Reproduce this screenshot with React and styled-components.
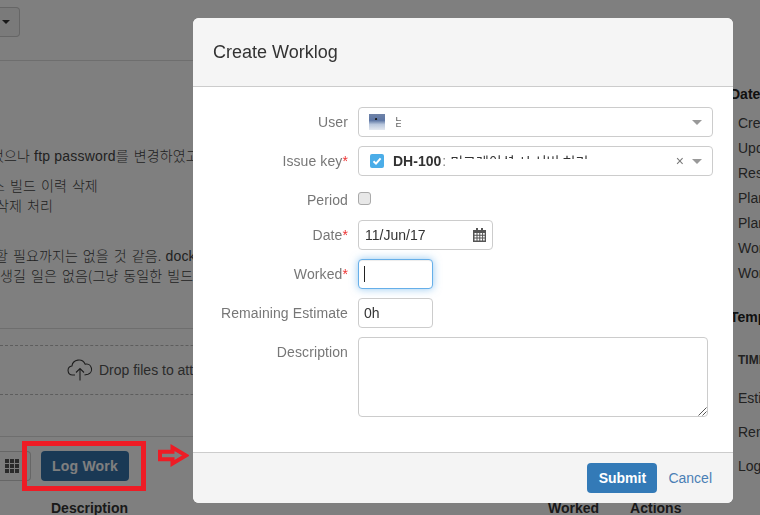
import React from 'react';
import styled, { createGlobalStyle } from 'styled-components';

const GlobalStyle = createGlobalStyle`
  html, body {
    margin: 0;
    padding: 0;
    height: 100%;
    overflow: hidden;
  }
  body {
    background: #fff;
    font-family: "Liberation Sans", "Noto Sans CJK KR", sans-serif;
    font-size: 14px;
    color: #333;
  }
`;

const dateRows = ['Created', 'Updated', 'Resolved', 'Planned start', 'Planned end', 'Work started', 'Work ended'];

const App = () => {
  return (
    <>
      <GlobalStyle />
      <Page>
        <MainColumn>
          <TopBar>
            <DropButton>
              <Caret />
            </DropButton>
          </TopBar>
          <BodyText>
            <BodyLine $indent={-9}>
              <Ko>었으나</Ko> ftp password<Ko>를 변경하였고 서버에 다시 등록</Ko>
            </BodyLine>
            <BodyLine $indent={-8} $gap={10}>
              <Ko>스 빌드 이력 삭제</Ko>
            </BodyLine>
            <BodyLine $indent={-4}>
              <Ko>삭제 처리</Ko>
            </BodyLine>
            <BodyLine $indent={-5} $gap={30}>
              <Ko>할 필요까지는 없을 것 같음.</Ko> docker <Ko>이미지 정리</Ko>
            </BodyLine>
            <BodyLine>
              <Ko>생길 일은 없음(그냥 동일한 빌드가 다시 생성됨)</Ko>
            </BodyLine>
          </BodyText>
          <DropArea>
            <DropZone>
              <svg width="26" height="22" viewBox="0 0 26 22" fill="none" stroke="#3c3c3c" strokeWidth="1.1">
                <path d="M8 16H5.5a4.5 4.5 0 0 1-.6-8.95A7 7 0 0 1 18.2 5.2a5.2 5.2 0 0 1 2.8 10L17.5 16" />
                <path d="M13 21.5V9.5M9 13.5l4-4 4 4" />
              </svg>
              Drop files to attach, or browse.
            </DropZone>
          </DropArea>
          <WorkBar>
            <GridButton>
              <svg width="14" height="14" viewBox="0 0 14 14" fill="#555">
                {[0, 5, 10].map((y) =>
                  [0, 5, 10].map((x) => <rect key={`${x}-${y}`} x={x} y={y} width="4" height="4" />)
                )}
              </svg>
            </GridButton>
            <LogWorkButton>Log Work</LogWorkButton>
          </WorkBar>
          <TableHead>
            <DescriptionHead>Description</DescriptionHead>
            <WorkedHead>Worked</WorkedHead>
            <ActionsHead>Actions</ActionsHead>
          </TableHead>
        </MainColumn>
        <SideColumn>
          <SideTitle>Dates</SideTitle>
          {dateRows.map((row) => (
            <SideRow key={row}>{row}</SideRow>
          ))}
          <SideTitle $top={23}>Tempo</SideTitle>
          <SideCaps>TIME</SideCaps>
          <SideSpaced>Estimated</SideSpaced>
          <SideSpaced>Remaining</SideSpaced>
          <SideSpaced>Logged</SideSpaced>
        </SideColumn>
      </Page>

      <Overlay />

      <RedBox />
      <RedArrow width="31" height="23" viewBox="0 0 31 23">
        <path d="M2 7.75h12.5V3.5L28 11.5l-13.5 8v-4.25H2z" fill="none" stroke="#ee1c25" strokeWidth="4" />
      </RedArrow>

      <Modal>
        <ModalHeader>Create Worklog</ModalHeader>
        <ModalBody>
          <Row>
            <Label>User</Label>
            <SelectBox>
              <Avatar />
              <GlitchName>
                <span>ㄴ</span>
                <span>ㄷ</span>
              </GlitchName>
              <SelectArrow />
            </SelectBox>
          </Row>
          <Row>
            <Label>Issue key<Star>*</Star></Label>
            <SelectBox>
              <IssueCheck>
                <svg width="10" height="10" viewBox="0 0 10 10" fill="none" stroke="#fff" strokeWidth="2">
                  <path d="M1.5 5.2 4 7.6 8.6 2.4" />
                </svg>
              </IssueCheck>
              <IssueKey>DH-100</IssueKey>
              <IssueColon>:</IssueColon>
              <IssueSummary>미그레이션 시 서버 처리</IssueSummary>
              <ClearMark>×</ClearMark>
              <SelectArrow />
            </SelectBox>
          </Row>
          <CheckRow>
            <Label>Period</Label>
            <CheckBox />
          </CheckRow>
          <Row>
            <Label>Date<Star>*</Star></Label>
            <DateBox>
              11/Jun/17
              <svg width="13" height="14" viewBox="0 0 13 14" fill="#555">
                <path d="M3 0h2v2h3V0h2v2h3v12H0V2h3zM1.5 5v1.8h2V5zm3 0v1.8h1.8V5zm2.8 0v1.8h1.8V5zm2.8 0v1.8h1.6V5zM1.5 7.8v1.8h2V7.8zm3 0v1.8h1.8V7.8zm2.8 0v1.8h1.8V7.8zm2.8 0v1.8h1.6V7.8zM1.5 10.6v1.9h2v-1.9zm3 0v1.9h1.8v-1.9zm2.8 0v1.9h1.8v-1.9zm2.8 0v1.9h1.6v-1.9z" fillRule="evenodd" />
              </svg>
            </DateBox>
          </Row>
          <Row>
            <Label>Worked<Star>*</Star></Label>
            <SmallBox $focused>
              <TextCursor />
            </SmallBox>
          </Row>
          <Row>
            <Label>Remaining Estimate</Label>
            <SmallBox>0h</SmallBox>
          </Row>
          <Row>
            <Label>Description</Label>
            <AreaBox>
              <svg width="9" height="9" viewBox="0 0 9 9" stroke="#555" strokeWidth="1">
                <path d="M0.5 8.5 8.5 0.5M4.5 8.5 8.5 4.5" />
              </svg>
            </AreaBox>
          </Row>
        </ModalBody>
        <ModalFooter>
          <SubmitButton>Submit</SubmitButton>
          <CancelLink>Cancel</CancelLink>
        </ModalFooter>
      </Modal>
    </>
  );
};

const Page = styled.div`
  display: grid;
  grid-template-columns: 730px 300px;
  width: 760px;
  height: 515px;
  overflow: hidden;
`;

const MainColumn = styled.div`
  display: flex;
  flex-direction: column;
  min-width: 0;
`;

const TopBar = styled.div`
  height: 61px;
  box-sizing: border-box;
  border-bottom: 1px solid #ddd;
  padding-top: 7px;
`;

const DropButton = styled.div`
  width: 20px;
  height: 30px;
  box-sizing: border-box;
  border: 1px solid #ccc;
  border-left: 0;
  border-radius: 0 4px 4px 0;
  background: #f5f5f5;
  display: flex;
  align-items: center;
  justify-content: center;
  padding-right: 8px;
`;

const Caret = styled.span`
  width: 0;
  height: 0;
  border-left: 4px solid transparent;
  border-right: 4px solid transparent;
  border-top: 4px solid #333;
`;

const BodyText = styled.div`
  height: 268px;
  box-sizing: border-box;
  padding-top: 84px;
  border-bottom: 1px solid #ddd;
  color: #444;
  font-size: 14px;
  letter-spacing: 0.2px;
  white-space: nowrap;
  overflow: hidden;
`;

const BodyLine = styled.div`
  height: 20px;
  line-height: 20px;
  margin-left: ${(p) => p.$indent || 0}px;
  margin-top: ${(p) => p.$gap || 0}px;
`;

const Ko = styled.span`
  font-family: "Noto Sans CJK KR", sans-serif;
  font-weight: 300;
  letter-spacing: 0.1px;
  word-spacing: 1.8px;
`;

const DropArea = styled.div`
  height: 108px;
  box-sizing: border-box;
  padding-top: 16px;
  border-bottom: 1px solid #ddd;
`;

const DropZone = styled.div`
  height: 50px;
  box-sizing: border-box;
  border-top: 1px dashed #bbb;
  border-bottom: 1px dashed #bbb;
  display: flex;
  align-items: center;
  gap: 6px;
  padding-left: 67px;
  color: #555;
  font-size: 14px;
  white-space: nowrap;
`;

const WorkBar = styled.div`
  display: flex;
  align-items: center;
  gap: 10px;
  padding-top: 14px;
`;

const GridButton = styled.div`
  width: 31px;
  height: 30px;
  box-sizing: border-box;
  border: 1px solid #ccc;
  border-left: 0;
  border-radius: 0 4px 4px 0;
  background: #f8f8f8;
  display: flex;
  align-items: center;
  justify-content: center;
  padding-right: 6px;
`;

const LogWorkButton = styled.div`
  width: 88px;
  height: 30px;
  border-radius: 4px;
  background: #3572ab;
  color: #fff;
  font-weight: 700;
  font-size: 14px;
  letter-spacing: 0.2px;
  display: flex;
  align-items: center;
  justify-content: center;
`;

const TableHead = styled.div`
  display: flex;
  padding-top: 19px;
  font-weight: 700;
  font-size: 14px;
  line-height: 16px;
  color: #333;
`;

const DescriptionHead = styled.span`
  margin-left: 51px;
`;

const WorkedHead = styled.span`
  margin-left: 420px;
`;

const ActionsHead = styled.span`
  margin-left: 31px;
`;

const SideColumn = styled.div`
  padding-top: 86px;
  color: #444;
  font-size: 14px;
  white-space: nowrap;
`;

const SideTitle = styled.div`
  font-weight: 700;
  color: #222;
  line-height: 16px;
  margin-top: ${(p) => p.$top || 0}px;
  margin-bottom: 9px;
`;

const SideRow = styled.div`
  line-height: 25px;
  padding-left: 8px;
`;

const SideCaps = styled.div`
  padding-left: 8px;
  font-size: 12px;
  font-weight: 700;
  line-height: 26px;
  margin-top: 22px;
  margin-bottom: 8px;
`;

const SideSpaced = styled.div`
  padding-left: 8px;
  line-height: 34px;
`;

const Overlay = styled.div`
  position: fixed;
  inset: 0;
  background: rgba(0, 0, 0, 0.5);
`;

const RedBox = styled.div`
  position: fixed;
  left: 22px;
  top: 441px;
  width: 124px;
  height: 50px;
  box-sizing: border-box;
  border: 5px solid #ee1c25;
`;

const RedArrow = styled.svg`
  position: fixed;
  left: 158px;
  top: 444px;
`;

const Modal = styled.div`
  position: fixed;
  left: 193px;
  top: 18px;
  width: 540px;
  height: 485px;
  display: flex;
  flex-direction: column;
  background: #fff;
  border-radius: 6px;
  overflow: hidden;
`;

const ModalHeader = styled.div`
  height: 69px;
  box-sizing: border-box;
  flex: none;
  background: #f5f5f5;
  border-bottom: 1px solid #ccc;
  padding-left: 20px;
  display: flex;
  align-items: center;
  font-size: 18px;
  color: #333;
`;

const ModalBody = styled.div`
  flex: 1;
  display: flex;
  flex-direction: column;
  gap: 9px;
  padding: 20px 20px 0 0;
`;

const Row = styled.div`
  display: flex;
  gap: 10px;
`;

const CheckRow = styled(Row)`
  height: 30px;
  margin-bottom: -4px;
`;

const Label = styled.div`
  width: 155px;
  flex: none;
  text-align: right;
  color: #777;
  font-size: 14px;
  line-height: 30px;
  letter-spacing: 0.1px;
`;

const Star = styled.span`
  color: #e33;
`;

const fieldBox = `
  box-sizing: border-box;
  height: 30px;
  border: 1px solid #ccc;
  border-radius: 4px;
  background: #fff;
  display: flex;
  align-items: center;
  color: #333;
  font-size: 14px;
`;

const SelectBox = styled.div`
  ${fieldBox}
  width: 355px;
  padding: 0 10px;
`;

const Avatar = styled.div`
  width: 16px;
  height: 16px;
  flex: none;
  background:
    radial-gradient(circle at 45% 32%, #222 0, #222 6%, transparent 10%),
    linear-gradient(180deg, #6f83a8 0%, #5d76a4 40%, #b8c6dc 65%, #e3e8f0 100%);
`;

const GlitchName = styled.span`
  margin-left: 10px;
  display: flex;
  flex-direction: column;
  font-family: "Noto Sans CJK KR", sans-serif;
  font-size: 8px;
  line-height: 6px;
  color: #222;
`;

const IssueCheck = styled.span`
  width: 14px;
  height: 14px;
  flex: none;
  margin-left: 1px;
  border-radius: 2px;
  background: #4bade8;
  display: flex;
  align-items: center;
  justify-content: center;
`;

const IssueKey = styled.span`
  margin-left: 9px;
  font-weight: 700;
`;

const IssueColon = styled.span`
  margin-left: 1px;
  color: #888;
`;

const IssueSummary = styled.span`
  font-family: "Noto Sans CJK KR", sans-serif;
  height: 8px;
  line-height: 20px;
  overflow: hidden;
  align-self: flex-start;
  margin-top: 4px;
  margin-left: 4px;
  white-space: nowrap;
`;

const ClearMark = styled.span`
  margin-left: auto;
  margin-right: 8px;
  color: #777;
  font-size: 14px;
  line-height: 14px;
`;

const SelectArrow = styled.span`
  width: 0;
  height: 0;
  flex: none;
  margin-left: auto;
  border-left: 5px solid transparent;
  border-right: 5px solid transparent;
  border-top: 5px solid #999;
  ${ClearMark} + & {
    margin-left: 0;
  }
`;

const CheckBox = styled.div`
  width: 13px;
  height: 13px;
  box-sizing: border-box;
  margin-top: 7px;
  border: 1px solid #aaa;
  border-radius: 3px;
  background: #e8e8e8;
`;

const DateBox = styled.div`
  ${fieldBox}
  width: 135px;
  padding: 0 6px 0 6px;
  justify-content: space-between;
`;

const SmallBox = styled.div`
  ${fieldBox}
  width: 75px;
  padding: 0 5px;
  ${(p) =>
    p.$focused &&
    `
    border-color: #66afe9;
    box-shadow: inset 0 1px 1px rgba(0, 0, 0, 0.075), 0 0 8px rgba(102, 175, 233, 0.7);
  `}
`;

const TextCursor = styled.span`
  width: 1px;
  height: 16px;
  background: #222;
`;

const AreaBox = styled.div`
  box-sizing: border-box;
  width: 350px;
  height: 80px;
  border: 1px solid #ccc;
  border-radius: 4px;
  display: flex;
  align-items: flex-end;
  justify-content: flex-end;
`;

const ModalFooter = styled.div`
  height: 51px;
  box-sizing: border-box;
  flex: none;
  background: #f4f4f4;
  border-top: 1px solid #ccc;
  display: flex;
  align-items: center;
  justify-content: flex-end;
  gap: 11px;
  padding: 0 21px 0 0;
`;

const SubmitButton = styled.div`
  width: 70px;
  height: 30px;
  border-radius: 4px;
  background: #337ab7;
  color: #fff;
  font-weight: 700;
  font-size: 14px;
  display: flex;
  align-items: center;
  justify-content: center;
`;

const CancelLink = styled.span`
  color: #4a7fb5;
  font-size: 14px;
`;

export default App;
